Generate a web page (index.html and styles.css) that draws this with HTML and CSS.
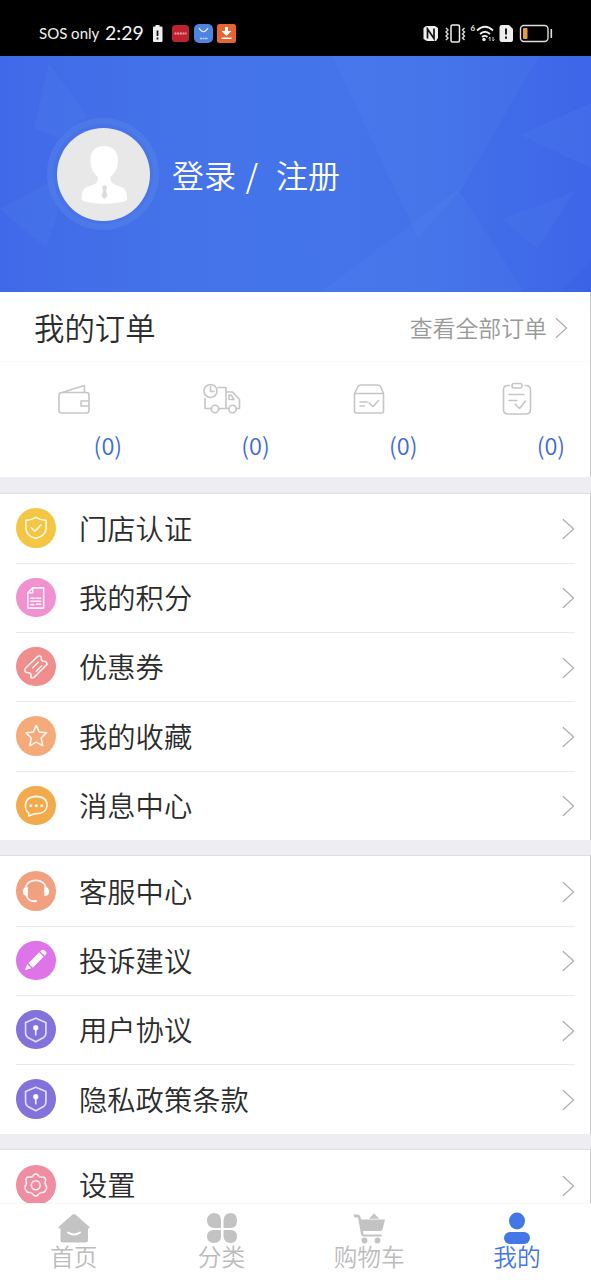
FILE: index.html
```
<!DOCTYPE html>
<html lang="zh-CN">
<head>
<meta charset="utf-8">
<title>我的</title>
<link rel="stylesheet" href="styles.css">
</head>
<body>
<svg class="defs" width="0" height="0">
  <symbol id="chevron" viewBox="0 0 14 24"><path d="M1 1.5L12.5 12L1 22.5" fill="none" stroke="#aaa" stroke-width="1.2"/></symbol>
  <symbol id="shield-lock" viewBox="0 0 40 40"><path d="M20 8.3L30.3 12.7V23.5Q30.3 26 28 27.8L20 32.2L12 27.8Q9.700 26 9.700 23.500V12.700Z" fill="none" stroke="#eef" stroke-width="1.7" stroke-linejoin="round"/><circle cx="20" cy="18" r="1.900" fill="#fff"/><path d="M20 18V25" stroke="#fff" stroke-width="1.700"/></symbol>
</svg>
<div class="screen">
  <header class="status">
    <span class="carrier">SOS only</span><span class="time">2:29</span>
    <svg class="status-left" width="90" height="24" viewBox="150 22 90 24">
      <path d="M155.500 25h4v1.500h2q1 0 1 1V41q0 1-1 1h-7.500q-1 0-1-1V27.500q0-1 1-1h1.500z" fill="#eee"/><path d="M157.500 30.500v5.500M157.500 37.500v2" stroke="#111" stroke-width="1.700"/>
      <rect x="172" y="25" width="17" height="17" rx="3.500" fill="#bd222d"/><path d="M174.500 33.500h12" stroke="#e7a3a6" stroke-width="1.800" stroke-dasharray="2 .7"/>
      <rect x="194" y="24" width="19" height="19" rx="5" fill="#4d84dd"/><path d="M199 28q4.500 7.500 9 0" fill="none" stroke="#e4efff" stroke-width="1.200"/><path d="M200 38.500h8" stroke="#b9d4ff" stroke-width="1.500" stroke-dasharray="2 .5"/>
      <rect x="217" y="24" width="19" height="19" rx="2.500" fill="#e56432"/><path d="M225 27h3v4h3.500l-5 5-5-5h3.500zM221.500 37.500h10v1.600h-10z" fill="#fff"/>
    </svg>
    <svg class="status-right" width="132" height="24" viewBox="421 22 132 24">
      <path d="M426 26h9l3 2v10l-2 3h-9l-3.500-2V28z" fill="#eee"/><path d="M427.500 38.500V29l6.500 9.500V28.500" fill="none" stroke="#111" stroke-width="1.700"/>
      <rect x="451" y="25" width="8.500" height="17" rx="1.500" fill="none" stroke="#eee" stroke-width="1.500"/><path d="M446 28l2 2-2 2 2 2-2 2 2 2-2 2M464.500 28l-2 2 2 2-2 2 2 2-2 2 2 2" fill="none" stroke="#ddd" stroke-width="1.400"/>
      <text class="wifi-gen" x="470.500" y="31">6</text><path d="M477 30.500q8-7.500 16 0M480 34q5-4.500 10 0M482 37q2.700-2.200 5.500 0" fill="none" stroke="#eee" stroke-width="1.800"/><circle cx="484" cy="39.500" r="1.700" fill="#eee"/><path d="M490 41v-4l-1.500 1.500M493 37v4l1.500-1.500" fill="none" stroke="#ccc" stroke-width="1"/>
      <path d="M502 25h7l4 4v11q0 2-2 2h-9q-2.500 0-2.500-2V27q0-2 2.500-2z" fill="#eee"/><path d="M506 28.500v6M506 36.500v2.200" stroke="#111" stroke-width="1.900"/>
      <rect x="520.500" y="25.500" width="27.500" height="16" rx="3.500" fill="none" stroke="#ddd" stroke-width="1.400"/><rect x="523" y="28" width="4.500" height="11" rx="1" fill="#e99a3e"/><path d="M551.300 29v9" stroke="#ddd" stroke-width="1.600"/>
    </svg>
  </header>

  <section class="profile">
    <svg class="profile-bg" width="591" height="236" viewBox="0 0 591 236">
      <g fill="#5a90f0" fill-opacity=".13">
        <path d="M49 7L87 60L57 82L34 72Z"/><path d="M0 153L56 123L57 160L46 192Z"/><path d="M332 0H539L462 133L418 182Z"/><path d="M320 236L458 133L524 236Z"/><path d="M591 47L520 79L591 112Z"/><path d="M575 135L503 163L537 193Z"/>
      </g>
      <path d="M591 205L560 236H591Z" fill="#3558dd" fill-opacity=".2"/>
    </svg>
    <svg class="avatar" width="112" height="112" viewBox="0 0 112 112">
      <circle cx="56" cy="56" r="56" fill="#5f8ce9" fill-opacity=".35"/><circle cx="56" cy="56" r="50" fill="#416be4" fill-opacity=".35"/><circle cx="56.500" cy="56.500" r="46.500" fill="#e8e8e8"/>
      <path d="M57 28c9 0 14 6 14 14 0 8-3 13-7.500 17 0 6 2 7 8 9 7 2 8.500 5 8.500 14-8 5-37 5-45.500 0 0-9 1.500-12 8.500-14 6-2 8-3 8-9C46 55 43.500 50 43.500 42 43.500 34 48 28 57 28Z" fill="#fff"/><path d="M57.500 67l2.500 2-1 4 1.500 5-3 3-3-3 1.500-5-1-4z" fill="#ddd"/>
    </svg>
    <a class="login">登录<span class="slash">/</span>注册</a>
  </section>

  <section class="orders">
    <div class="orders-head"><h1 class="orders-title">我的订单</h1><a class="orders-all">查看全部订单</a><svg class="chevron-head" width="13" height="24"><use href="#chevron"/></svg></div>
    <div class="orders-grid">
      <div class="order"><svg class="order-icon" viewBox="0 0 40 40"><path d="M8 13.500H32.500Q35 13.500 35 16V31.500Q35 34 32.500 34H7.500Q5 34 5 31.500V16Q5 13.500 8 13.500L30.500 6.500V13.500M35 22H27V27H35"/></svg><span class="count">(0)</span></div>
      <div class="order"><svg class="order-icon" viewBox="0 0 40 40"><circle cx="8.500" cy="12" r="6.500"/><path d="M8.500 7.500V12.500H12M16 8.500H24V29.500H16.500M9.500 29.500H3V19.500M24 13H30.500L37.500 20.500V29.500H34M27 29.500H24M27 20.500V16H29L32 20.500Z"/><circle cx="13" cy="30" r="3.700"/><circle cx="30.500" cy="30" r="3.700"/></svg><span class="count">(0)</span></div>
      <div class="order"><svg class="order-icon" viewBox="0 0 40 40"><path d="M5.500 14.500L9 7.500Q10 6 12 6H28.500Q30.500 6 31.500 7.500L34.500 14.500V32Q34.500 34 32.500 34H7.500Q5.500 34 5.500 32ZM5.500 14.500H34.500M11 23H18.500M11 27H15.500M20 24L24 27.500L29.500 21.500"/></svg><span class="count">(0)</span></div>
      <div class="order"><svg class="order-icon" viewBox="0 0 40 40"><path d="M12.500 6.500H11Q6.500 6.500 6.500 11V30.500Q6.500 35 11 35H29Q33.500 35 33.500 30.500V11Q33.500 6.500 29 6.500H28M12 15.500H27M12 21.500H20M18 25L22.500 29.500L28.500 22"/><rect x="15" y="4.500" width="10" height="4.500" rx="2"/></svg><span class="count">(0)</span></div>
    </div>
  </section>

  <section class="group">
    <div class="row"><svg class="row-icon yellow" viewBox="0 0 40 40"><path d="M20 9.500Q25 12.500 30.500 12.500V20Q30.500 28 20 31Q10 28 10 20V12.500Q15.500 12.500 20 9.500ZM15.500 20L19 23.500L25.500 17"/></svg><div class="cell"><span class="label">门店认证</span><svg class="chevron" width="13" height="24"><use href="#chevron"/></svg></div></div>
    <div class="row"><svg class="row-icon pink" viewBox="0 0 40 40"><path d="M17 10H28V30.500H12V15ZM17 10V15H12M15 20.500H18.500M20.500 20.500H25M15 23.500H25M15 27H18M20.500 26.500H25"/></svg><div class="cell"><span class="label">我的积分</span><svg class="chevron" width="13" height="24"><use href="#chevron"/></svg></div></div>
    <div class="row"><svg class="row-icon coral" viewBox="0 0 40 40"><path d="M9 22L22 9.500Q24 8 25.500 10Q25 14 28 14.500Q31 14 31.500 17.500L18.500 30.500Q16.500 32 15 30.500Q16 26.500 13 26Q10 26.500 9 24.500ZM17 21L22.500 15.500M20.500 24.500L26 19"/></svg><div class="cell"><span class="label">优惠券</span><svg class="chevron" width="13" height="24"><use href="#chevron"/></svg></div></div>
    <div class="row"><svg class="row-icon orange" viewBox="0 0 40 40"><path d="M20.500 9.500L23.500 16.300L31 17L25.500 22.300L27 30L20.500 26.500L14 30L15.500 22.300L10 17L17.500 16.300Z"/></svg><div class="cell"><span class="label">我的收藏</span><svg class="chevron" width="13" height="24"><use href="#chevron"/></svg></div></div>
    <div class="row"><svg class="row-icon amber" viewBox="0 0 40 40"><path d="M13 30.500V27.500Q9.500 25 9.500 20Q9.500 11 20.500 10.500Q31.500 11 31.500 19.500Q31 28 20.500 28Q18 28 13 30.500Z"/><path class="dots" d="M15 20h.1M20.500 20h.1M26 20h.1"/></svg><div class="cell"><span class="label">消息中心</span><svg class="chevron" width="13" height="24"><use href="#chevron"/></svg></div></div>
  </section>

  <section class="group">
    <div class="row"><svg class="row-icon salmon" viewBox="0 0 40 40"><path d="M9.500 17Q11.500 9.500 20 9.500T30.500 17M10.500 25Q12 29.500 17 30.500"/><path class="solid" d="M12 16v9.500Q7 25.500 7 20.800T12 16ZM28.500 16v9.500Q33.500 25.500 33.500 20.800T28.500 16Z"/><ellipse class="solid" cx="18.500" cy="30.500" rx="3" ry="1.200"/></svg><div class="cell"><span class="label">客服中心</span><svg class="chevron" width="13" height="24"><use href="#chevron"/></svg></div></div>
    <div class="row"><svg class="row-icon violet" viewBox="0 0 40 40"><path class="solid" d="M9 29.500L11.500 23.500L15.500 27.500ZM12.500 22.500L23.500 11.500L28 16L17 27ZM24.500 10.500L26.500 9Q27.700 8.300 29 9.500L30.500 11Q31.500 12.500 30.500 13.500L29 15Z"/></svg><div class="cell"><span class="label">投诉建议</span><svg class="chevron" width="13" height="24"><use href="#chevron"/></svg></div></div>
    <div class="row"><svg class="row-icon purple" viewBox="0 0 40 40"><use href="#shield-lock"/></svg><div class="cell"><span class="label">用户协议</span><svg class="chevron" width="13" height="24"><use href="#chevron"/></svg></div></div>
    <div class="row"><svg class="row-icon purple" viewBox="0 0 40 40"><use href="#shield-lock"/></svg><div class="cell"><span class="label">隐私政策条款</span><svg class="chevron" width="13" height="24"><use href="#chevron"/></svg></div></div>
  </section>

  <section class="group last">
    <div class="row"><svg class="row-icon rose" viewBox="0 0 40 40"><path d="M17.500 10.500Q20 7.500 22.500 10.500Q24 13 26.500 12.200Q30 12 30 15.500Q28.800 18 30 20Q32 23 30 25.500Q29 28 26.500 27.800Q24 27.500 22.500 30Q20 33 17.500 30Q16 27.500 13.500 27.800Q11 28 10 25.500Q8 23 10 20Q11.200 18 10 15.500Q10 12 13.500 12.200Q16 13 17.500 10.500Z"/><circle cx="20" cy="20.500" r="4.500"/></svg><div class="cell"><span class="label">设置</span><svg class="chevron" width="13" height="24"><use href="#chevron"/></svg></div></div>
  </section>

  <nav class="tabs">
    <a class="tab"><svg class="tab-icon" viewBox="0 0 34 34"><path d="M17 2Q18 2 19 3L32 14.500Q33.500 16 31.500 16.500H31V28Q31 30.500 28.500 30.500H6Q3.500 30.500 3.500 28V16.500H2.500Q.5 16 2 14.500L15 3Q16 2 17 2Z"/><path d="M11 20.500Q17 24.500 23 20.500" fill="none" stroke="#fff" stroke-width="2" stroke-linecap="round"/></svg><span>首页</span></a>
    <a class="tab"><svg class="tab-icon" viewBox="0 0 34 34"><path d="M16 16H9Q2 15 2 8.500T9 1Q16 1 16 8.500ZM18.500 16V8.500Q19 1 25.500 1T32 8.500T25.500 16ZM16 18V24.500Q16 31 9 31T2 24.500T9 18ZM18.500 18H25.500Q32 18 32 24.500T25.500 31T18.500 24.500Z"/></svg><span>分类</span></a>
    <a class="tab"><svg class="tab-icon" viewBox="0 0 34 34"><path d="M2 2.500H6Q8 2.500 8.500 5L9 7.500H33L30.500 17.500Q30 19 28 19H11L11.500 22.500H29.500V24.500H12Q9.500 24.500 9 22L6 5.500H3Q1 4.500 2 2.500ZM17 6.800L22 1.500L27.500 6.800Z"/><circle cx="12.500" cy="28.500" r="2.900"/><circle cx="25.500" cy="28.500" r="2.900"/></svg><span>购物车</span></a>
    <a class="tab active"><svg class="tab-icon" viewBox="0 0 34 34"><ellipse cx="17" cy="9" rx="8" ry="8.500"/><rect x="4" y="20" width="26" height="12" rx="6"/></svg><span>我的</span></a>
  </nav>
</div>
</body>
</html>
```
FILE: styles.css
```
* { box-sizing: border-box; }
body { margin: 0; background: #fff; font-family: "Noto Sans CJK SC", sans-serif; font-weight: 350; color: #2c2c2c; }
.defs { position: absolute; }
.screen { width: 591px; height: 1280px; overflow: hidden; display: flex; flex-direction: column; background: #eeedf2; }
.status { flex: none; height: 56px; padding: 11px 38px 0 39px; display: flex; align-items: center; background: #000; color: #f2f2f2; font-family: Lato, sans-serif; font-weight: 400; }
.carrier { font-size: 15px; width: 66px; white-space: nowrap; margin-top: -2px; }
.time { font-size: 19.5px; width: 45px; white-space: nowrap; margin-top: -2px; }
.status-right { margin-left: auto; }
.wifi-gen { font: bold 8px Lato, sans-serif; fill: #eee; }
.profile { flex: none; height: 236px; display: grid; grid-template-columns: auto 1fr; align-items: center; background: linear-gradient(90deg, #4069e9 0, #4371e9 22%, #4474ea 48%, #4371e9 72%, #3d66e8 100%); }
.profile-bg { grid-area: 1 / 1 / 2 / 3; }
.avatar { grid-area: 1 / 1; margin-left: 47px; }
.login { grid-area: 1 / 2; margin-left: 13px; font-size: 32px; line-height: 48px; color: #fff; }
.slash { margin: 0 18px 0 9.5px; }
.orders { flex: none; height: 185px; background: #fff; border-right: 1px solid #c8c8cc; }
.orders-head { height: 70px; padding: 2px 22px 0 34px; display: flex; align-items: center; border-bottom: 1px solid #fafafa; }
.orders-title { margin: -2px 0 0; flex: 1; font-size: 30.4px; line-height: 44px; font-weight: inherit; }
.orders-all { margin: -2px 8px 0 0; font-size: 22.9px; color: #999; }
.orders-grid { display: grid; grid-template-columns: repeat(4, 147.7px); }
.order { height: 100px; padding-top: 17px; display: flex; flex-direction: column; align-items: center; }
.order-icon { width: 40px; height: 40px; fill: none; stroke: #c6c6c6; stroke-width: 1.6; stroke-linejoin: round; stroke-linecap: round; }
.count { padding-left: 68px; margin-top: 11px; font-size: 23.5px; line-height: 30px; color: #3f6bd5; }
.group { flex: none; margin-top: 15.5px; padding-left: 16px; background: #fff; border-top: 1px solid #dfdfe2; border-right: 1px solid #c8c8cc; }
.row { display: flex; align-items: center; height: 69.3px; }
.row-icon { width: 39.500px; height: 39.500px; border-radius: 50%; fill: none; stroke: #fff; stroke-opacity: .88; stroke-width: 1.6; stroke-linejoin: round; stroke-linecap: round; }
.row-icon .solid { fill: #fff; stroke: none; }
.row-icon .dots { stroke-width: 3; }
.cell { flex: 1; height: 100%; margin-left: 23.500px; margin-right: 15px; display: flex; align-items: center; justify-content: space-between; }
.row + .row { background: linear-gradient(#eaeaea, #eaeaea) left top / calc(100% - 15px) 1px no-repeat; }
.label { font-size: 28.3px; line-height: 34px; margin-top: -1px; }
.chevron { margin-top: 2px; }
.yellow { background: #f3c744; }
.pink { background: #f092cf; }
.coral { background: #ef8e8c; }
.orange { background: #f5ab79; }
.amber { background: #f2aa4c; }
.salmon { background: #f2a180; }
.violet { background: #df74e8; }
.purple { background: #8371dc; }
.rose { background: #f08da2; }
.last { height: 54px; overflow: hidden; }
.tabs { flex: 1; display: grid; grid-template-columns: repeat(4, 147.7px); background: #fff; border-top: 1px solid #f6f6f6; }
.tab { padding-top: 8px; display: flex; flex-direction: column; align-items: center; font-size: 23.7px; line-height: 20px; color: #bcbcbc; }
.tab-icon { width: 34px; height: 34px; fill: #c3c3c3; }
.active { color: #4377e5; }
.active .tab-icon { fill: #4377e5; }
```
